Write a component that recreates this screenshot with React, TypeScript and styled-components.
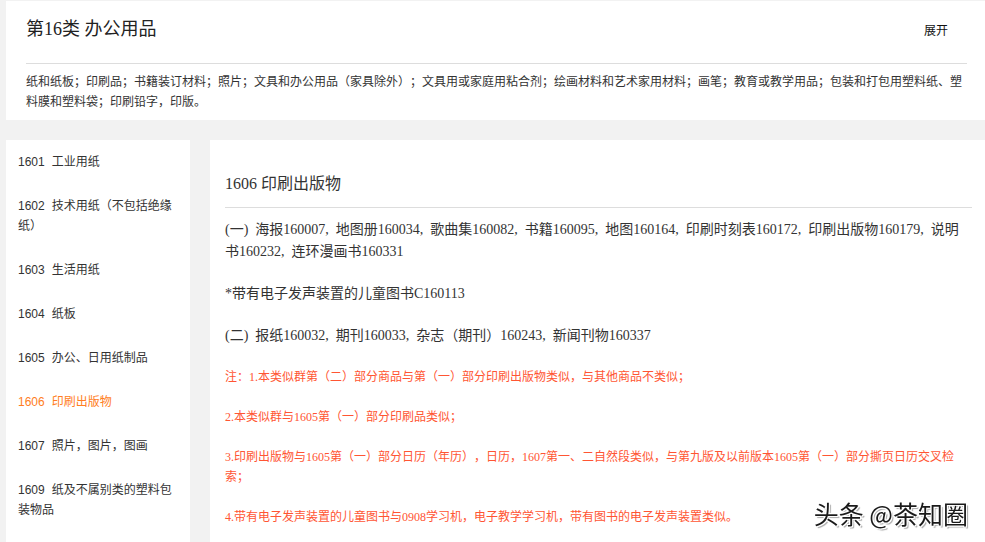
import React from 'react';
import styled, { createGlobalStyle } from 'styled-components';

const GlobalStyle = createGlobalStyle`
  html, body {
    margin: 0;
    padding: 0;
    overflow: hidden;
    background: #f2f2f2;
  }
  body {
    font-family: 'Liberation Serif', 'Noto Sans CJK SC', serif;
    color: #333333;
    text-spacing-trim: space-all;
  }
`;

interface ICategory {
  code: string;
  name: string;
}

const categories: ICategory[] = [
  { code: '1601', name: '工业用纸' },
  { code: '1602', name: '技术用纸（不包括绝缘纸）' },
  { code: '1603', name: '生活用纸' },
  { code: '1604', name: '纸板' },
  { code: '1605', name: '办公、日用纸制品' },
  { code: '1606', name: '印刷出版物' },
  { code: '1607', name: '照片，图片，图画' },
  { code: '1609', name: '纸及不属别类的塑料包装物品' },
  { code: '1610', name: '办公装订、封口用品' },
];

const notes = [
  '注：1.本类似群第（二）部分商品与第（一）部分印刷出版物类似，与其他商品不类似；',
  '2.本类似群与1605第（一）部分印刷品类似；',
  '3.印刷出版物与1605第（一）部分日历（年历），日历，1607第一、二自然段类似，与第九版及以前版本1605第（一）部分撕页日历交叉检索；',
  '4.带有电子发声装置的儿童图书与0908学习机，电子教学学习机，带有图书的电子发声装置类似。',
];

// comma + en space, as the listing separates its items
const sep = ',\u2002';

const App = () => {
  const active = '1606';

  return (
    <>
      <GlobalStyle />
      <Page>
        <ClassCard>
          <ClassHeader>
            <ClassTitle>第16类 办公用品</ClassTitle>
            <ExpandButton>展开</ExpandButton>
          </ClassHeader>
          <ClassDesc>
            纸和纸板；印刷品；书籍装订材料；照片；文具和办公用品（家具除外）；文具用或家庭用粘合剂；绘画材料和艺术家用材料；画笔；教育或教学用品；包装和打包用塑料纸、塑料膜和塑料袋；印刷铅字，印版。
          </ClassDesc>
        </ClassCard>

        <Body>
          <Sidebar>
            {categories.map(c => (
              <SideItem key={c.code} active={c.code === active}>
                <span className="code">{c.code}</span>
                {c.name}
              </SideItem>
            ))}
          </Sidebar>

          <Content>
            <ContentTitle>1606 印刷出版物</ContentTitle>
            <Article>
              <Para>
                {`(一)\u00a0\u00a0海报160007${sep}地图册160034${sep}歌曲集160082${sep}书籍160095${sep}地图160164${sep}印刷时刻表160172${sep}印刷出版物160179${sep}说明书160232${sep}连环漫画书160331`}
              </Para>
              <Para>*带有电子发声装置的儿童图书C160113</Para>
              <Para>
                {`(二)\u00a0\u00a0报纸160032${sep}期刊160033${sep}杂志（期刊）160243${sep}新闻刊物160337`}
              </Para>
              {notes.map(n => (
                <Note key={n}>{n}</Note>
              ))}
            </Article>
          </Content>
        </Body>
      </Page>
      <Watermark>头条 @茶知圈</Watermark>
    </>
  );
};

const Page = styled.div`
  width: 981px;
  padding: 1px 0 0 6px;
`;

const ClassCard = styled.section`
  background: #ffffff;
  padding: 0 20px 8px;
`;

const ClassHeader = styled.div`
  display: flex;
  align-items: center;
  justify-content: space-between;
  height: 63px;
  padding-bottom: 6px;
  box-sizing: border-box;
  border-bottom: 1px solid #dddddd;
`;

const ClassTitle = styled.h1`
  margin: 0;
  font-size: 18px;
  font-weight: normal;
  line-height: 24px;
  color: #222222;
`;

const ExpandButton = styled.button`
  margin-right: 19px;
  padding: 0;
  border: none;
  background: none;
  font-family: 'Liberation Sans', 'Noto Sans CJK SC', sans-serif;
  font-size: 12px;
  color: #111111;
  cursor: pointer;
`;

const ClassDesc = styled.p`
  margin: 8px 0 0;
  font-family: 'Liberation Sans', 'Noto Sans CJK SC', sans-serif;
  font-size: 12px;
  line-height: 20px;
  color: #333333;
`;

const Body = styled.div`
  display: flex;
  gap: 20px;
  margin-top: 20px;
  align-items: flex-start;
`;

const Sidebar = styled.nav`
  width: 184px;
  flex-shrink: 0;
  padding: 0 12px;
  box-sizing: border-box;
  background: #ffffff;
  min-height: 600px;
`;

const SideItem = styled.div<{ active?: boolean }>`
  padding: 12px 0;
  font-family: 'Liberation Sans', 'Noto Sans CJK SC', sans-serif;
  font-size: 12px;
  line-height: 20px;
  color: ${({ active }) => (active ? '#ff7d22' : '#333333')};
  cursor: pointer;
  .code {
    margin-right: 7px;
  }
`;

const Content = styled.main`
  flex: 1;
  padding: 0 15px;
  background: #ffffff;
  min-height: 600px;
`;

const ContentTitle = styled.h2`
  margin: 0;
  padding: 32px 0 11px;
  font-size: 16px;
  font-weight: normal;
  line-height: 24px;
  color: #333333;
  border-bottom: 1px solid #dddddd;
`;

const Article = styled.div`
  padding-top: 11px;
`;

const Para = styled.p`
  margin: 0 0 20px;
  padding-right: 4px;
  font-size: 14px;
  line-height: 22px;
  color: #333333;
`;

const Note = styled.p`
  margin: 0 0 20px;
  font-size: 12px;
  line-height: 20px;
  color: #ff5533;
`;

const Watermark = styled.div`
  position: fixed;
  right: 17px;
  bottom: 16px;
  font-family: 'Noto Sans CJK SC', sans-serif;
  font-size: 25px;
  line-height: 26px;
  color: #1a1a1a;
  text-shadow: 1px 1px 0 #ffffff, -1px -1px 0 #ffffff, 1px -1px 0 #ffffff, -1px 1px 0 #ffffff,
    2px 2px 1px rgba(0, 0, 0, 0.35);
`;

export default App;
